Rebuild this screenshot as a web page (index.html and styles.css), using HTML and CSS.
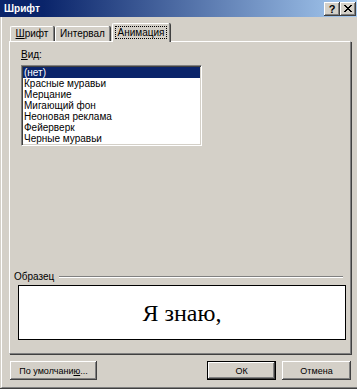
FILE: index.html
```html
<!DOCTYPE html>
<html lang="ru">
<head>
<meta charset="utf-8">
<title>Шрифт</title>
<link rel="stylesheet" href="styles.css">
</head>
<body>
<div class="window">
  <div class="titlebar">
    <span class="title">Шрифт</span>
    <div class="tb-buttons">
      <div class="tb-btn help">?</div>
      <div class="tb-btn close">
        <svg width="8" height="7" viewBox="0 0 8 7" shape-rendering="crispEdges">
          <path d="M0 0h2v1h-2zM6 0h2v1h-2zM1 1h2v1h-2zM5 1h2v1h-2zM2 2h4v1h-4zM3 3h2v1h-2zM2 4h4v1h-4zM1 5h2v1h-2zM5 5h2v1h-2zM0 6h2v1h-2zM6 6h2v1h-2z" fill="#000"/>
        </svg>
      </div>
    </div>
  </div>
  <div class="content">
    <div class="tabs">
      <div class="tab tab-font"><span class="acc">Ш</span>рифт</div>
      <div class="tab tab-spacing">Интервал</div>
      <div class="tab tab-anim active"><span class="focus">Анимация</span></div>
    </div>
    <div class="panel">
      <div class="field">
        <div class="label"><span class="acc">В</span>ид:</div>
        <ul class="listbox">
          <li class="selected">(нет)</li>
          <li>Красные муравьи</li>
          <li>Мерцание</li>
          <li>Мигающий фон</li>
          <li>Неоновая реклама</li>
          <li>Фейерверк</li>
          <li>Черные муравьи</li>
        </ul>
      </div>
      <div class="sample">
        <div class="sample-head">
          <span class="sample-label">Образец</span>
          <span class="etched"></span>
        </div>
        <div class="preview">Я знаю,</div>
      </div>
    </div>
    <div class="buttons">
      <div class="btn btn-default-set">По умолчани<span class="acc">ю</span>...</div>
      <div class="right-buttons">
        <div class="btn btn-ok">ОК</div>
        <div class="btn btn-cancel">Отмена</div>
      </div>
    </div>
  </div>
</div>
</body>
</html>
```

FILE: styles.css
```css
html, body {
  margin: 0;
  padding: 0;
  background: #d4d0c8;
}

.window {
  width: 357px;
  height: 389px;
  box-sizing: border-box;
  background: #d4d0c8;
  font-family: "Liberation Sans", Arial, sans-serif;
  font-size: 10px;
  color: #000;
  display: flex;
  flex-direction: column;
  border-bottom: 1px solid #404040;
  overflow: hidden;
}

.titlebar {
  height: 17px;
  flex: none;
  display: flex;
  align-items: flex-start;
  justify-content: space-between;
  padding: 0 1px 0 4px;
  background: linear-gradient(to right, #0a246a 0%, #0a246a 12%, #a6caf0 100%);
}

.title {
  color: #fff;
  font-weight: bold;
  font-size: 10px;
  line-height: 17px;
}

.tb-buttons {
  display: flex;
  padding-top: 2px;
}

.tb-btn {
  width: 16px;
  height: 14px;
  box-sizing: border-box;
  background: #d4d0c8;
  box-shadow: inset -1px -1px #404040, inset 1px 1px #fff, inset -2px -2px #808080;
  display: flex;
  align-items: center;
  justify-content: center;
}

.help {
  font-weight: bold;
  font-size: 11px;
  line-height: 12px;
  padding-bottom: 1px;
}

.close svg {
  display: block;
  margin-top: -1px;
}

.content {
  flex: 1;
  display: flex;
  flex-direction: column;
  margin-left: 1px;
  border-left: 1px solid #fff;
  border-bottom: 1px solid #808080;
  padding-bottom: 6px;
}

.tabs {
  display: flex;
  align-items: flex-end;
  height: 18px;
  margin-top: 6px;
  padding-left: 8px;
  position: relative;
  z-index: 1;
}

.tab {
  height: 15px;
  box-sizing: border-box;
  border-top: 1px solid #fff;
  border-left: 1px solid #fff;
  border-right: 1px solid #808080;
  box-shadow: 1px 0 #404040;
  border-radius: 2px 2px 0 0;
  background: #d4d0c8;
  line-height: 13px;
  text-align: center;
  white-space: nowrap;
}

.tab-font {
  width: 44px;
  margin-right: 1px;
}

.tab-spacing {
  width: 55px;
  margin-right: 1px;
}

.tab-anim {
  width: 58px;
  margin-left: 1px;
}

.tab.active {
  height: 19px;
  margin-bottom: -1px;
  padding-top: 2px;
}

.focus {
  display: inline-block;
  outline: 1px dotted #000;
  outline-offset: 0;
  line-height: 11px;
  padding: 0 2px;
}

.acc {
  text-decoration: underline;
}

.panel {
  margin-left: 7px;
  margin-right: 6px;
  height: 313px;
  box-sizing: border-box;
  border-top: 1px solid #fff;
  border-left: 1px solid #fff;
  border-right: 1px solid #808080;
  border-bottom: 1px solid #808080;
  box-shadow: 1px 1px #404040;
  padding: 7px 4px 0 4px;
  display: flex;
  flex-direction: column;
}

.field {
  padding-left: 7px;
}

.label {
  line-height: 12px;
  margin-bottom: 4px;
}

.listbox {
  list-style: none;
  margin: 0;
  padding: 0;
  width: 181px;
  height: 81px;
  box-sizing: border-box;
  background: #fff;
  border-top: 1px solid #808080;
  border-left: 1px solid #808080;
  border-right: 1px solid #fff;
  border-bottom: 1px solid #fff;
  box-shadow: inset 1px 1px #404040, inset -1px -1px #d4d0c8;
  padding: 1px;
}

.listbox li {
  height: 11px;
  line-height: 11px;
  padding-left: 1px;
  white-space: nowrap;
}

.listbox li.selected {
  background: #0a246a;
  color: #fff;
}

.sample {
  margin-top: 125px;
}

.sample-head {
  display: flex;
  align-items: center;
  height: 12px;
  margin-bottom: 2px;
}

.sample-label {
  line-height: 12px;
}

.etched {
  flex: 1;
  height: 0;
  border-top: 1px solid #808080;
  border-bottom: 1px solid #fff;
  margin-left: 5px;
  margin-right: 3px;
}

.preview {
  margin-left: 4px;
  height: 55px;
  box-sizing: border-box;
  background: #fff;
  border: 1px solid #000;
  display: flex;
  align-items: center;
  justify-content: center;
  font-family: "Liberation Serif", "Times New Roman", serif;
  font-size: 24px;
  padding-top: 1px;
}

.buttons {
  display: flex;
  justify-content: space-between;
  margin-top: 7px;
  padding-left: 8px;
  margin-right: 6px;
}

.right-buttons {
  display: flex;
  gap: 6px;
}

.btn {
  height: 19px;
  box-sizing: border-box;
  background: #d4d0c8;
  box-shadow: inset -1px -1px #404040, inset 1px 1px #fff, inset -2px -2px #808080;
  display: flex;
  align-items: center;
  justify-content: center;
  white-space: nowrap;
  font-size: 9px;
}

.btn-default-set {
  width: 87px;
}

.btn-ok {
  width: 69px;
  border: 1px solid #000;
}

.btn-cancel {
  width: 69px;
}
```
